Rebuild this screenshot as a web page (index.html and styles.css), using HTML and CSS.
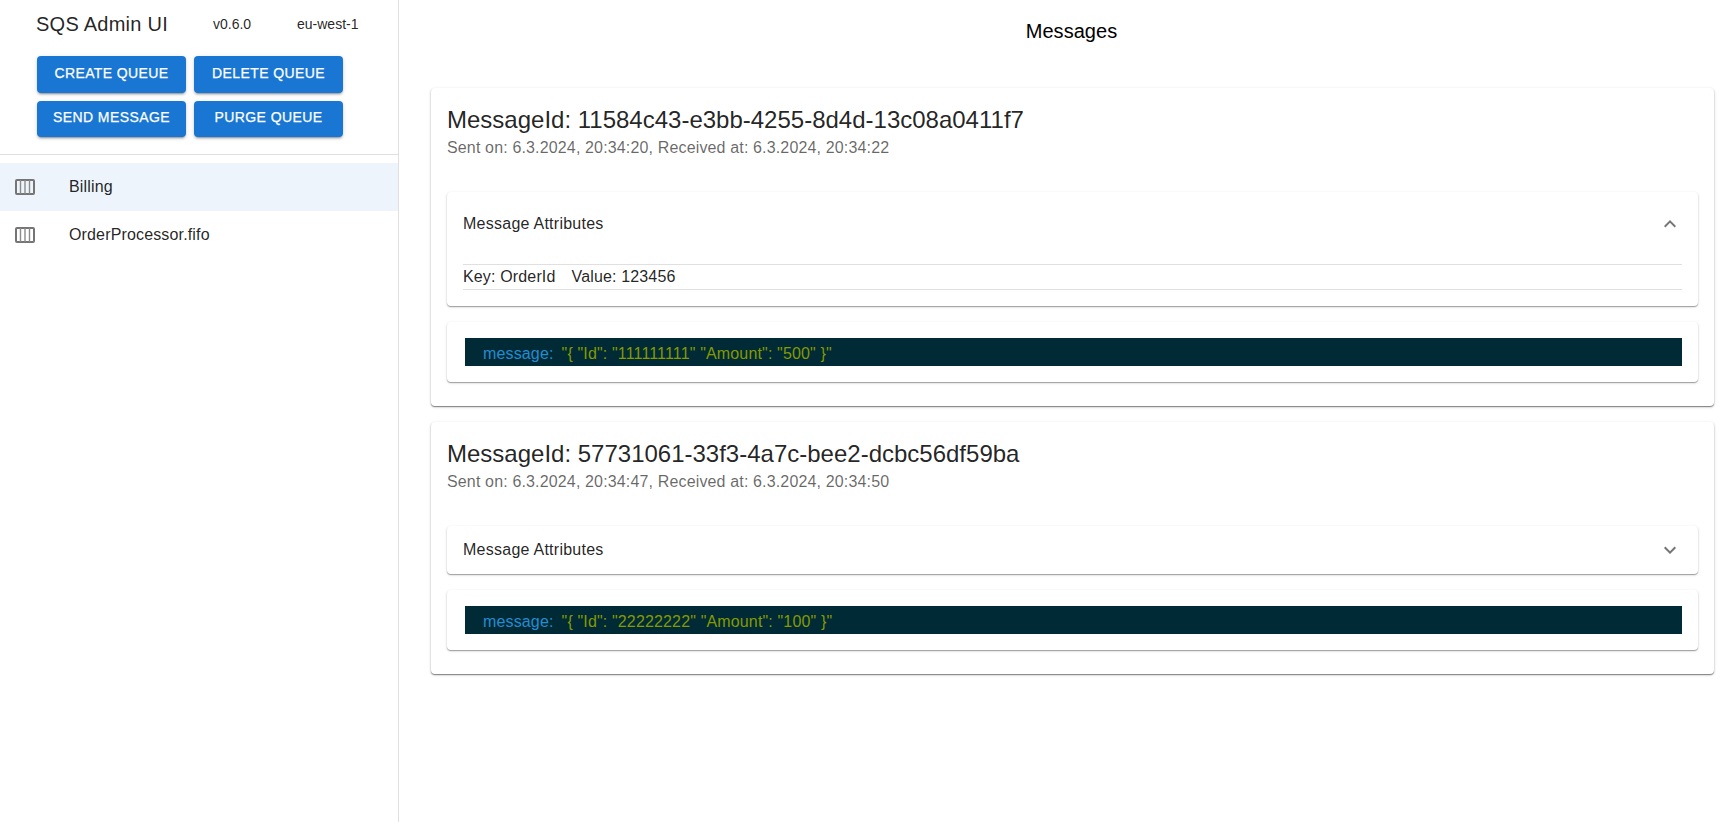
FILE: index.html
```html
<!DOCTYPE html>
<html lang="en">
<head>
<meta charset="utf-8">
<title>SQS Admin UI</title>
<link rel="stylesheet" href="styles.css">
</head>
<body>
<div class="app">
  <aside class="drawer">
    <div class="brand">
      <span class="brand-title">SQS Admin UI</span>
      <span class="brand-meta version">v0.6.0</span>
      <span class="brand-meta region">eu-west-1</span>
    </div>
    <div class="actions">
      <button class="btn">Create Queue</button>
      <button class="btn">Delete Queue</button>
      <button class="btn btn-short">Send Message</button>
      <button class="btn btn-short">Purge Queue</button>
    </div>
    <hr class="divider">
    <ul class="queues">
      <li class="queue selected">
        <svg class="queue-icon" viewBox="0 0 24 24"><rect class="icon-frame" x="3" y="5" width="18" height="14" rx="1"/><path class="icon-bars" d="M7.5 5v14 M12 5v14 M16.5 5v14"/></svg>
        <span>Billing</span>
      </li>
      <li class="queue">
        <svg class="queue-icon" viewBox="0 0 24 24"><rect class="icon-frame" x="3" y="5" width="18" height="14" rx="1"/><path class="icon-bars" d="M7.5 5v14 M12 5v14 M16.5 5v14"/></svg>
        <span>OrderProcessor.fifo</span>
      </li>
    </ul>
  </aside>
  <main class="main">
    <h1 class="page-title">Messages</h1>
    <section class="card">
      <h2 class="msg-id">MessageId: 11584c43-e3bb-4255-8d4d-13c08a0411f7</h2>
      <p class="msg-sub">Sent on: 6.3.2024, 20:34:20, Received at: 6.3.2024, 20:34:22</p>
      <div class="panel accordion open">
        <div class="accordion-head">
          <span>Message Attributes</span>
          <svg class="chev" viewBox="0 0 24 24"><path d="M7.41 15.41 12 10.83l4.59 4.58L18 14l-6-6-6 6z"/></svg>
        </div>
        <div class="accordion-body"><div class="attr"><span class="attr-key">Key: OrderId</span><span>Value: 123456</span></div></div>
      </div>
      <div class="panel code-panel">
        <div class="code"><span class="code-key">message:</span><span class="code-val">"{ "Id": "111111111" "Amount": "500" }"</span></div>
      </div>
    </section>
    <section class="card">
      <h2 class="msg-id">MessageId: 57731061-33f3-4a7c-bee2-dcbc56df59ba</h2>
      <p class="msg-sub">Sent on: 6.3.2024, 20:34:47, Received at: 6.3.2024, 20:34:50</p>
      <div class="panel accordion">
        <div class="accordion-head closed">
          <span>Message Attributes</span>
          <svg class="chev" viewBox="0 0 24 24"><path d="M16.59 8.59 12 13.17 7.41 8.59 6 10l6 6 6-6z"/></svg>
        </div>
      </div>
      <div class="panel code-panel">
        <div class="code"><span class="code-key">message:</span><span class="code-val">"{ "Id": "22222222" "Amount": "100" }"</span></div>
      </div>
    </section>
  </main>
</div>
</body>
</html>
```
FILE: styles.css
```css
* { box-sizing: border-box; }
html, body { margin: 0; height: 100%; }
body {
  font-family: "Liberation Sans", Arial, sans-serif;
  color: rgba(0, 0, 0, 0.87);
  background: #fff;
}
.app { display: flex; height: 822px; overflow: hidden; }

.drawer {
  width: 399px;
  flex: none;
  border-right: 1px solid #e0e0e0;
}
.brand {
  display: flex;
  align-items: center;
  height: 48px;
  padding-left: 36px;
}
.brand-title { font-size: 20px; width: 177px; letter-spacing: 0.25px; }
.brand-meta { font-size: 14px; }
.version { width: 84px; }
.actions {
  display: grid;
  grid-template-columns: 149px 149px;
  column-gap: 8px;
  row-gap: 8px;
  padding: 8px 0 0 37px;
}
.btn {
  height: 37px;
  padding: 0 0 2px;
  border: 0;
  border-radius: 4px;
  background: #1976d2;
  color: #fff;
  font: 500 14px/1.75 "Liberation Sans", Arial, sans-serif;
  letter-spacing: 0.4px;
  -webkit-text-stroke: 0.25px #fff;
  text-transform: uppercase;
  box-shadow: 0 3px 1px -2px rgba(0,0,0,.2), 0 2px 2px 0 rgba(0,0,0,.14), 0 1px 5px 0 rgba(0,0,0,.12);
}
.btn-short { height: 36px; padding-bottom: 3px; }
.divider { border: 0; border-top: 1px solid #e0e0e0; margin: 17px 0 8px; }
.queues { list-style: none; margin: 0; padding: 0; }
.queue {
  display: flex;
  align-items: center;
  height: 48px;
  padding-left: 13px;
  font-size: 16px;
  letter-spacing: 0.15px;
}
.queue.selected { background: rgba(25, 118, 210, 0.08); }
.queue-icon {
  width: 24px;
  height: 24px;
  margin-right: 32px;
  fill: none;
}
.icon-frame { stroke: #757575; stroke-width: 2; }
.icon-bars { stroke: #8a8a8a; stroke-width: 1.4; }

.main { flex: 1; padding: 0 21px 0 32px; min-width: 0; }
.page-title {
  margin: 0;
  height: 88px;
  padding: 19px 2px 0 0;
  font-size: 20px;
  font-weight: 400;
  line-height: 24px;
  letter-spacing: 0.05px;
  text-align: center;
  color: #000;
}
.card {
  margin-bottom: 16px;
  padding: 16px 16px 24px;
  border-radius: 4px;
  background: #fff;
  box-shadow: 0 1px 1px 0 rgba(0,0,0,.4), 0 1px 3px 0 rgba(0,0,0,.22);
}
.msg-id { margin: 0; font-size: 24px; font-weight: 400; line-height: 32px; }
.msg-sub { margin: 0 0 32px; font-size: 16px; line-height: 24px; letter-spacing: 0.15px; color: rgba(0,0,0,.6); }
.panel {
  border-radius: 4px;
  background: #fff;
  box-shadow: 0 1px 1px 0 rgba(0,0,0,.3), 0 1px 3px 0 rgba(0,0,0,.16);
}
.accordion { margin-bottom: 16px; }
.accordion-head {
  display: flex;
  align-items: center;
  justify-content: space-between;
  height: 64px;
  padding: 0 16px;
  font-size: 16px;
  letter-spacing: 0.25px;
}
.accordion-head.closed { height: 48px; }
.chev { width: 24px; height: 24px; fill: #757575; }
.accordion-body { padding: 8px 16px 16px; }
.attr {
  display: flex;
  height: 26px;
  align-items: center;
  border-top: 1px solid #e0e0e0;
  border-bottom: 1px solid #e0e0e0;
  font-size: 16px;
  letter-spacing: 0.15px;
}
.attr-key { margin-right: 16px; }
.code-panel { padding: 16px 16px 16px 18px; }
.code {
  display: flex;
  align-items: center;
  height: 28px;
  padding: 3px 0 0 18px;
  background: #002b36;
  font-size: 16px;
  line-height: 25px;
  letter-spacing: 0.15px;
}
.code-key { color: #268bd2; margin-right: 8px; }
.code-val { color: #859900; }
```
